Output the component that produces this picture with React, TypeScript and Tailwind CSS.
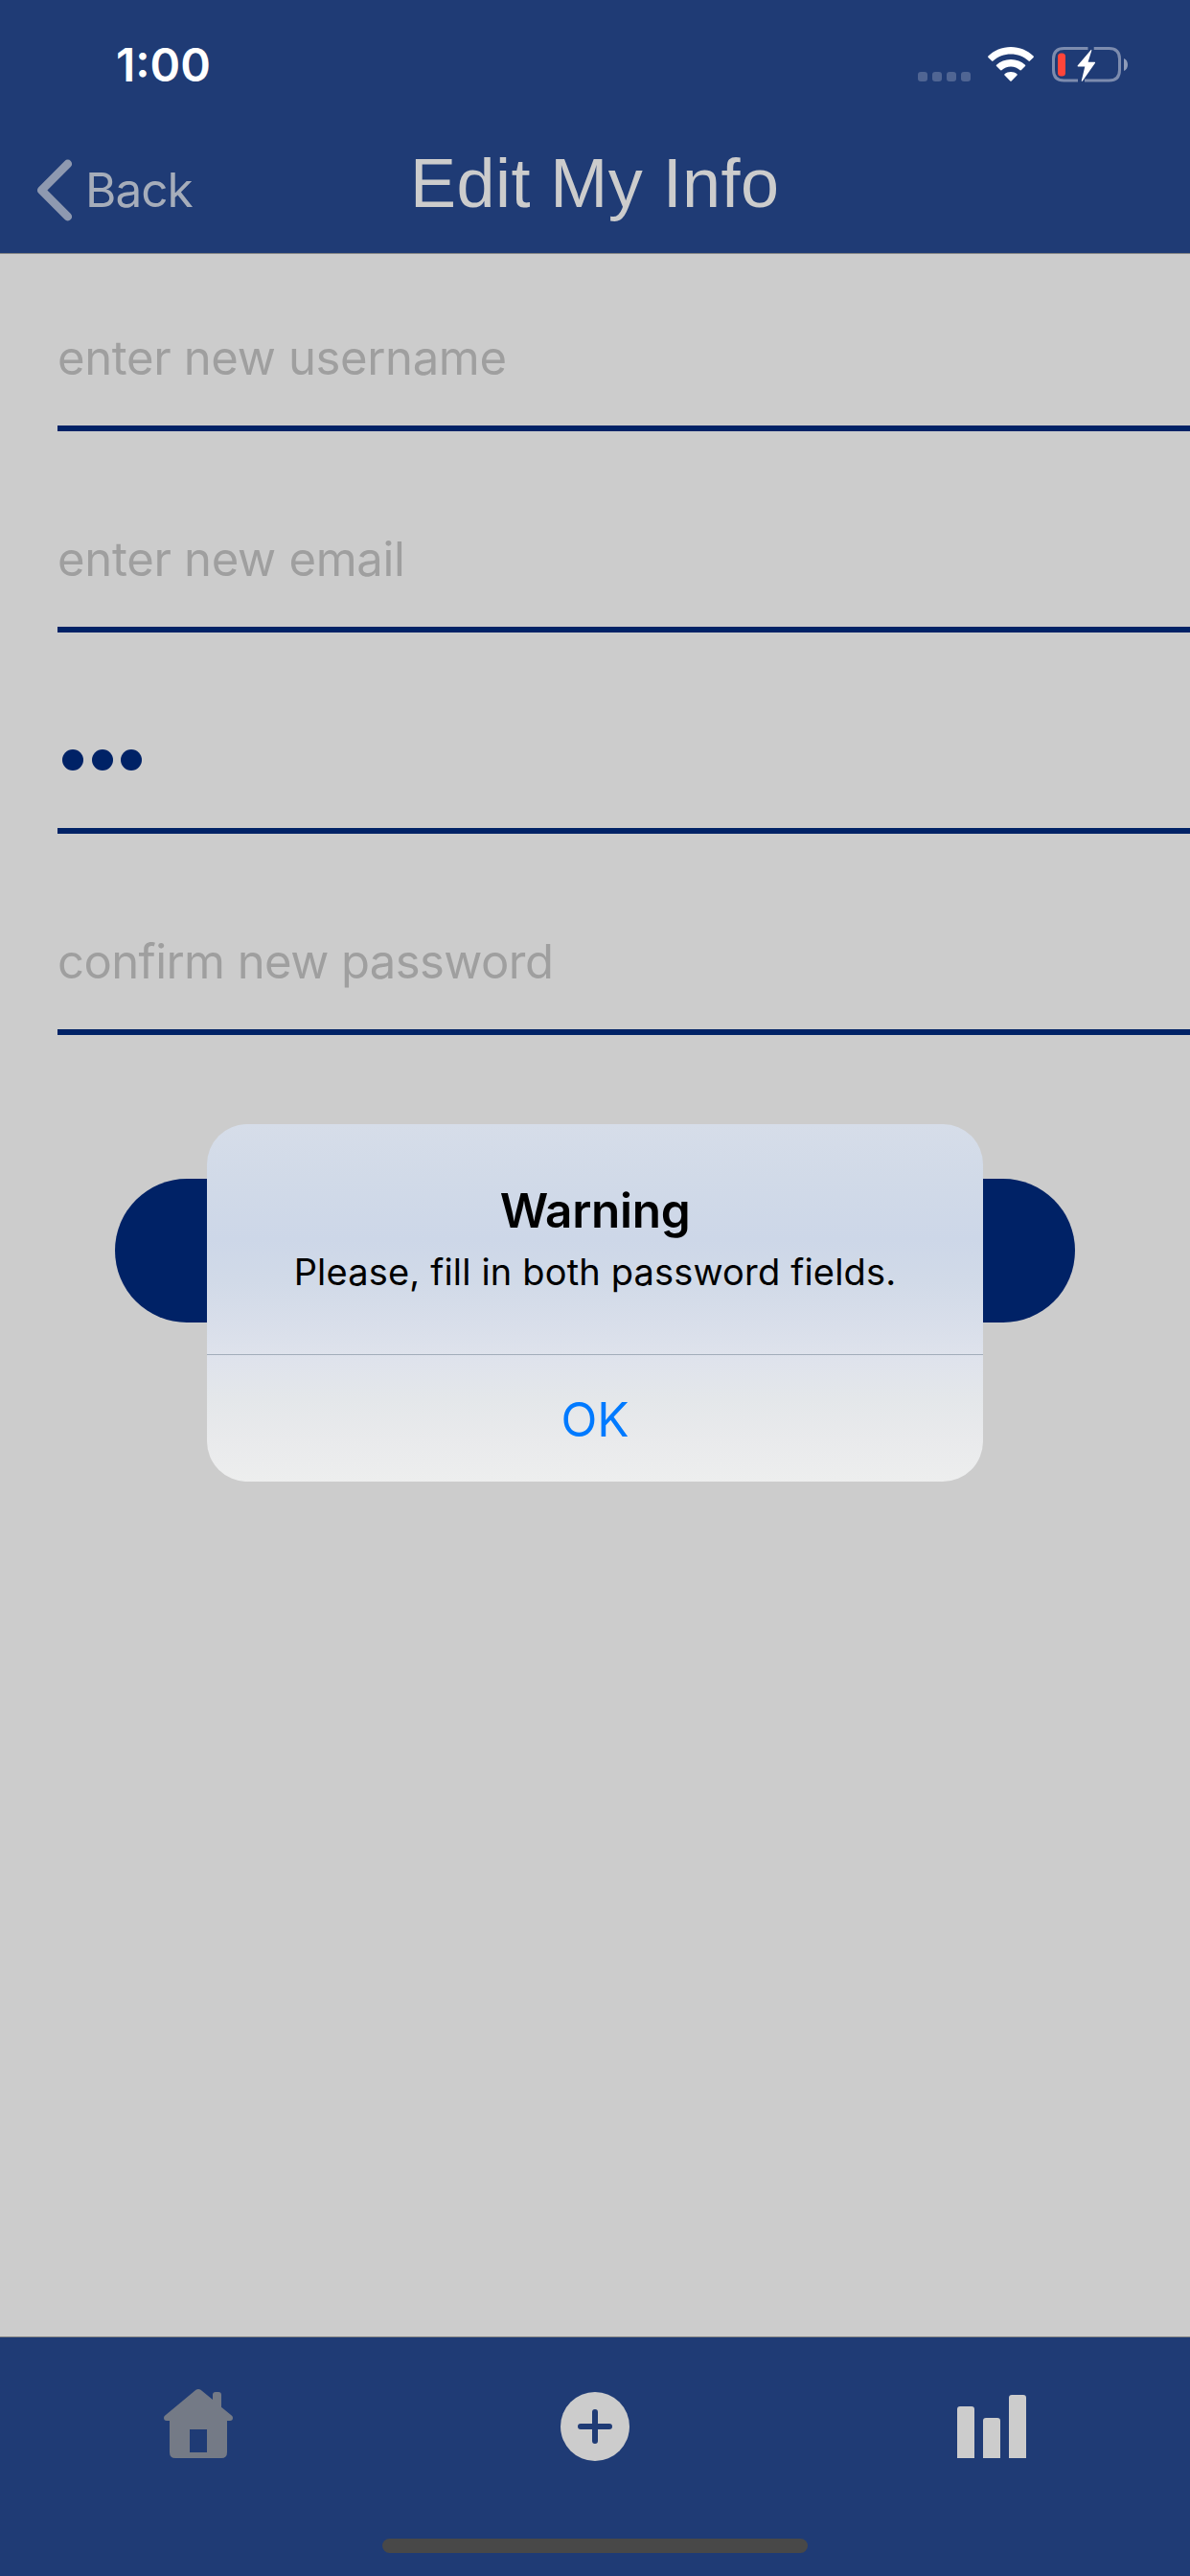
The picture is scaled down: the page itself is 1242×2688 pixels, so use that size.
const fields = [
  { label: "enter new username", spacing: "tracking-[-0.35px]" },
  { label: "enter new email", spacing: "tracking-[-0.3px]" },
  { label: "new password", filled: 3, spacing: "" },
  { label: "confirm new password", spacing: "tracking-[-0.57px]" },
];

function CellularDots() {
  return (
    <div className="flex gap-[5px]">
      {[0, 1, 2, 3].map((i) => (
        <span key={i} className="size-[10px] rounded-[3px] bg-[#506593]" />
      ))}
    </div>
  );
}

function WifiIcon() {
  return (
    <svg width="48" height="36" viewBox="0 0 48 36" fill="#fff">
      <path d="M24 0C33.3 0 41.7 3.7 47.6 9.5Q48.2 10.2 47.6 10.9L43.9 14.6Q43.2 15.3 42.5 14.6C37.5 10 31 7.500 24 7.500S10.500 10 5.500 14.6Q4.800 15.300 4.100 14.600L.4 10.900Q-.2 10.200 .4 9.500C6.300 3.700 14.700 0 24 0Z" />
      <path d="M24 13C29.800 13 35 15.200 39 18.700Q39.700 19.400 39 20.100L35 24.100Q34.300 24.800 33.600 24.200C31 21.900 27.700 20.400 24 20.400S17 21.900 14.400 24.200Q13.700 24.800 13 24.100L9 20.100Q8.300 19.400 9 18.700C13 15.200 18.200 13 24 13Z" />
      <path d="M24 26C26.500 26 28.700 26.800 30.500 28.200Q31.200 28.900 30.500 29.500L24.700 35.400Q24 36 23.300 35.400L17.500 29.500Q16.800 28.900 17.500 28.200C19.300 26.800 21.500 26 24 26Z" />
    </svg>
  );
}

function BatteryIcon() {
  return (
    <svg width="80" height="40" viewBox="0 0 80 40" fill="none">
      <path
        d="M37.500 3.500H12.500Q1.500 3.500 1.500 14.500V26Q1.500 37 12.500 37H27M43.700 3.500H59.500Q70.500 3.500 70.500 14.500V26Q70.500 37 59.500 37H34"
        stroke="#7d8cae"
        strokeWidth="3"
      />
      <path d="M75 14C80.300 16 80.300 25 75 27Z" fill="#8f9cb9" />
      <rect x="6" y="8.500" width="8" height="24" rx="3.500" fill="#ff453a" />
      <path d="M40.700 5L26.600 21.500Q26.400 22.400 27.200 22.400H34.300L30.700 37.500Q31.200 38.300 32 37.300L45 18.800Q45.400 17.800 44.500 17.800H37.600L41.300 5.700Q41.400 4.500 40.700 5Z" fill="#fff" />
    </svg>
  );
}

function Header() {
  return (
    <header className="h-[265px] shrink-0 border-b border-[#858585] bg-[#1f3b75]">
      <div className="flex h-[132px] items-center justify-between pt-[3px] pl-[121px] pr-[64px] text-white">
        <time className="text-[48px] leading-none font-semibold">1:00</time>
        <div className="mb-[3px] flex items-end">
          <CellularDots />
          <div className="ml-[18px]">
            <WifiIcon />
          </div>
          <div className="-mb-[2px] ml-[19px]">
            <BatteryIcon />
          </div>
        </div>
      </div>
      <nav className="grid h-[132px] grid-cols-[428px_1fr] items-center">
        <a className="flex items-center pl-[36px]">
          <svg width="42" height="68" viewBox="0 0 42 68" fill="none">
            <path d="M34.700 7L7.300 34.500L34.700 62" stroke="#8e99b0" strokeWidth="8.800" strokeLinecap="round" strokeLinejoin="round" />
          </svg>
          <span className="ml-[11px] pt-[2px] text-[49.5px] leading-none tracking-[-1px] text-[#a6adba]">Back</span>
        </a>
        <h1 className="pb-[14px] font-['Liberation_Sans',sans-serif] text-[72px] leading-none tracking-[0.45px] text-[#cccccc]">
          Edit My Info
        </h1>
      </nav>
    </header>
  );
}

function Form() {
  return (
    <main className="flex-1 pt-[35px] pl-[60px]">
      <div className="flex flex-col gap-[60px]">
        {fields.map((field) => (
          <div key={field.label} className="flex h-[150px] items-center border-b-[6px] border-[#002266] pt-[2px]">
            {field.filled ? (
              <div className="flex gap-[8.500px] pl-[5px]">
                {Array.from({ length: field.filled }, (_, i) => (
                  <span key={i} className="size-[22px] rounded-full bg-[#002266]" />
                ))}
              </div>
            ) : (
              <span className={`text-[49px] leading-none text-[#9f9f9f] ${field.spacing}`}>{field.label}</span>
            )}
          </div>
        ))}
      </div>
      <div className="mt-[150px] mr-[120px] ml-[60px] h-[150px] rounded-full bg-[#002266]" />
    </main>
  );
}

function TabBar() {
  return (
    <footer className="flex h-[250px] shrink-0 flex-col items-center justify-between border-t border-[#858585] bg-[#1f3b75] pb-[24px]">
      <div className="grid h-[180px] w-full grid-cols-3 place-items-center">
        <svg width="72" height="72" viewBox="0 0 72 72" fill="#747a86">
          <path
            fillRule="evenodd"
            d="M33.500 .8Q36 -.8 38.500 .8L51 11V6Q51 3 54 3H57Q60 3 60 6V18.700L71 27.700Q72 28.700 72 30Q72 33 69 33H66V66Q66 72 60 72H12Q6 72 6 66V33H3Q0 33 0 30Q0 28.700 1 27.700ZM27 42V66H45V42Z"
          />
        </svg>
        <svg width="72" height="78" viewBox="0 0 72 78">
          <circle cx="36" cy="42" r="36" fill="#cccccc" />
          <path d="M36 27V57M21 42H51" stroke="#1f3b75" strokeWidth="6" strokeLinecap="round" />
        </svg>
        <svg width="72" height="72" viewBox="0 0 72 72" fill="#cccccc">
          <path d="M0 72V21Q0 18 3 18H15Q18 18 18 21V72ZM27 72V33Q27 30 30 30H42Q45 30 45 33V72ZM54 72V9Q54 6 57 6H69Q72 6 72 9V72Z" />
        </svg>
      </div>
      <div className="h-[15px] w-[444px] rounded-full bg-[#484848]" />
    </footer>
  );
}

function WarningDialog() {
  return (
    <div
      role="alertdialog"
      className="absolute top-[1173px] left-[216px] flex h-[373px] w-[810px] flex-col overflow-hidden rounded-[42px] bg-[linear-gradient(180deg,#d6dde9_0%,#d1dae8_15%,#cdd7e8_32%,#d1dae8_44%,#d8deea_55%,#dfe3ec_66%,#e4e7ea_77%,#e9eaec_88%,#edeeee_100%)] text-center text-black"
    >
      <div className="flex h-[240px] flex-col items-center pt-[60px]">
        <h2 className="text-[49.5px] leading-[60px] font-semibold tracking-[-0.3px]">Warning</h2>
        <p className="mt-[10px] text-[38px] leading-[48px] tracking-[0.17px]">Please, fill in both password fields.</p>
      </div>
      <button className="flex-1 border-t border-[#a2acba] pt-[3px] text-[49.5px] leading-none text-[#007aff]">OK</button>
    </div>
  );
}

export default function App() {
  return (
    <div className="relative flex h-[2688px] w-[1242px] flex-col overflow-hidden bg-[#cccccc] font-['Inter',sans-serif]">
      <Header />
      <Form />
      <TabBar />
      <WarningDialog />
    </div>
  );
}
